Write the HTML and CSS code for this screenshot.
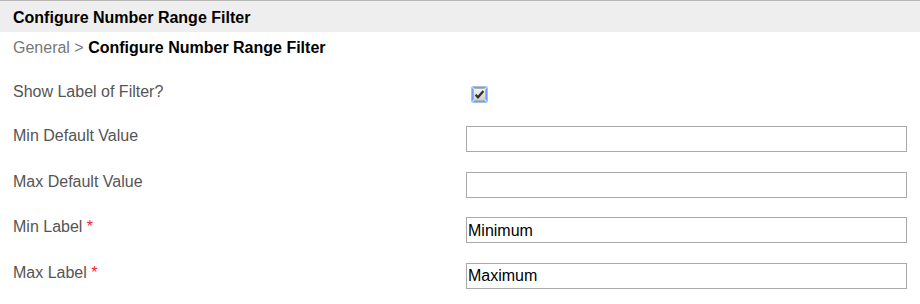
FILE: index.html
```html
<!DOCTYPE html>
<html>
<head>
<meta charset="utf-8">
<link rel="stylesheet" href="styles.css">
</head>
<body>
<div class="panel">
  <div class="header">Configure Number Range Filter</div>
  <div class="crumb"><span class="crumb-parent">General &gt; </span><span class="crumb-current">Configure Number Range Filter</span></div>
  <div class="form">
    <div class="row row-check">
      <div class="label">Show Label of Filter?</div>
      <div class="field">
        <span class="checkbox">
          <svg width="17" height="17" viewBox="0 0 17 17">
            <defs>
              <linearGradient id="cg" x1="0" y1="0" x2="0" y2="1">
                <stop offset="0" stop-color="#f4f4f4"/>
                <stop offset="1" stop-color="#cfcfcf"/>
              </linearGradient>
            </defs>
            <rect x="0.5" y="0.5" width="16" height="16" rx="1.5" fill="none" stroke="#9cc2f5" stroke-width="1"/>
            <rect x="1.5" y="1.5" width="14" height="14" rx="1" fill="none" stroke="#6ea2ee" stroke-width="1"/>
            <rect x="2.5" y="2.5" width="12" height="12" rx="1" fill="url(#cg)" stroke="#b0b0b0" stroke-width="1"/>
            <path d="M4.6 8.8 L7 11.3 L12.4 5" fill="none" stroke="#2e2e2e" stroke-width="2.2"/>
          </svg>
        </span>
      </div>
    </div>
    <div class="row">
      <div class="label">Min Default Value</div>
      <div class="field"><input class="text" type="text" value=""></div>
    </div>
    <div class="row">
      <div class="label">Max Default Value</div>
      <div class="field"><input class="text" type="text" value=""></div>
    </div>
    <div class="row">
      <div class="label">Min Label <span class="req">*</span></div>
      <div class="field"><input class="text" type="text" value="Minimum"></div>
    </div>
    <div class="row">
      <div class="label">Max Label <span class="req">*</span></div>
      <div class="field"><input class="text" type="text" value="Maximum"></div>
    </div>
  </div>
</div>
</body>
</html>
```

FILE: styles.css
```css
html, body {
  margin: 0;
  padding: 0;
  background: #fff;
}
body {
  font-family: "Liberation Sans", Arial, sans-serif;
  font-size: 16px;
  line-height: 18px;
  color: #333;
}
.panel {
  width: 920px;
}
.header {
  border-top: 1px solid #b8b8b8;
  background: #eeeeee;
  height: 32px;
  box-sizing: border-box;
  padding: 8px 13px 0;
  font-weight: bold;
  color: #000;
}
.crumb {
  padding: 7px 13px 0;
  height: 18px;
}
.crumb-parent {
  color: #777;
}
.crumb-current {
  color: #000;
  font-weight: bold;
}
.form {
  padding-top: 25px;
  display: flex;
  flex-direction: column;
}
.row {
  display: grid;
  grid-template-columns: 466px 441px;
  align-items: start;
  height: 45.67px;
}
.row-check {
  height: 44px;
}
.label {
  padding: 1px 0 0 13px;
  color: #555;
}
.req {
  color: #f5193a;
}
.field {
  display: flex;
}
.checkbox {
  display: block;
  width: 17px;
  height: 17px;
  margin: 4px 0 0 5px;
}
.checkbox svg {
  display: block;
}
.text {
  box-sizing: border-box;
  width: 441px;
  height: 26px;
  margin: 0;
  border: 1px solid #a9a9a9;
  padding: 1px 1px 0;
  font-family: "Liberation Sans", Arial, sans-serif;
  font-size: 16px;
  color: #000;
  background: #fff;
  outline: none;
}
```
